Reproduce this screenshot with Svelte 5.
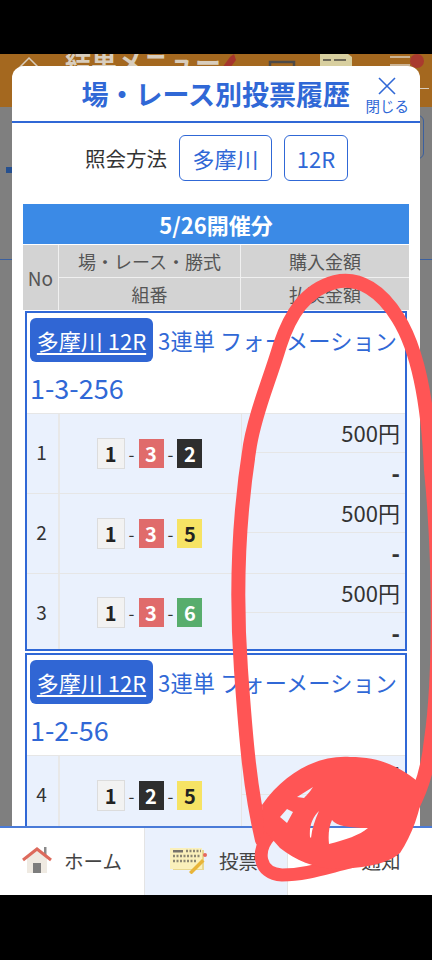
<script>
  const groups = [
    {
      combo: '1-3-256',
      rows: [
        { no: 1, boats: [1, 3, 2] },
        { no: 2, boats: [1, 3, 5] },
        { no: 3, boats: [1, 3, 6], short: true }
      ]
    },
    {
      combo: '1-2-56',
      rows: [{ no: 4, boats: [1, 2, 5] }]
    }
  ];
</script>

<div class="page">
  <div class="bar-top"></div>
  <main class="stage">
    <header class="bg-header">
      <svg class="bg-home" viewBox="0 0 24 24" width="24" height="24"><path d="M2 13 12 3l10 10M5 11v10h14V11" fill="none" stroke="#d8cdbd" stroke-width="1.5"/></svg>
      <span class="bg-title">結果メニュー</span>
      <svg class="bg-icons" viewBox="0 0 210 14" width="210" height="14">
        <path d="M4 14 12 3l4-3 2 6-6 8z" fill="#a5352d"/>
        <path d="M52 14V8h24v6" fill="none" stroke="#4d4a48" stroke-width="2.5"/>
        <path d="M102 0h28l4 3v11h-32z" fill="#d8cf9f"/>
        <path d="M105 5h8v2h-8zM116 5h12v2h-12z" fill="#6f6a58"/>
        <path d="M172 3h20M172 11h20" stroke="#d8cdbd" stroke-width="1.5"/>
        <circle cx="199" cy="7" r="7" fill="#a93a2e"/>
      </svg>
      <span class="bg-line"></span>
    </header>
    <span class="bg-btn"></span>
    <span class="bg-mark"></span>
    <span class="bg-rule"></span>

    <section class="modal">
      <div class="modal-head">
        <h1>場・レース別投票履歴</h1>
        <div class="close">
          <svg viewBox="0 0 20 20" width="20" height="20"><path d="M2 2 18 18M18 2 2 18" stroke="#3068d6" stroke-width="1.6" fill="none"/></svg>
          <span>閉じる</span>
        </div>
      </div>
      <div class="query">
        <span class="query-label">照会方法</span>
        <span class="chip venue">多摩川</span>
        <span class="chip">12R</span>
      </div>
      <div class="table">
        <div class="date">5/26開催分</div>
        <div class="thead">
          <div class="th no">No</div>
          <div class="th">場・レース・勝式</div>
          <div class="th">購入金額</div>
          <div class="th">組番</div>
          <div class="th">払戻金額</div>
        </div>
        {#each groups as g}
          <div class="group">
            <div class="group-head">
              <div class="line"><span class="pill">多摩川 12R</span><span class="kind">3連単 フォーメーション</span></div>
              <div class="combo">{g.combo}</div>
            </div>
            {#each g.rows as r}
              <div class="row" class:short={r.short}>
                <div class="cell num">{r.no}</div>
                <div class="cell boats">
                  {#each r.boats as b, i}
                    {#if i > 0}<span class="dash">-</span>{/if}
                    <span class="boat b{b}">{b}</span>
                  {/each}
                </div>
                <div class="amounts">
                  <div class="amt">500円</div>
                  <div class="amt dashv">-</div>
                </div>
              </div>
            {/each}
          </div>
        {/each}
      </div>
    </section>

    <nav class="nav">
      <div class="nav-item">
        <svg viewBox="0 0 30 28" width="30" height="28"><path d="M5 12 15 4l10 8v15H5z" fill="#efeae2"/><path d="M11 17h8v10h-8z" fill="#7d7d7d"/><path d="M22 1h2.500v8H22z" fill="#8a8a8a"/><path d="M1 14 15 3l14 11" fill="none" stroke="#dd6a5c" stroke-width="3"/></svg>
        <span>ホーム</span>
      </div>
      <div class="nav-item active">
        <svg viewBox="0 0 38 28" width="38" height="28">
          <path d="M1 2h32v21H1z" fill="#faf0bb"/>
          <path d="M33 4h2v20H4v-1h29z" fill="#e8d890"/>
          <path d="M4 4h10v2.500H4z" fill="#77736a"/>
          <path d="M4 10h27M4 15h24M17 5h15" stroke="#8b8672" stroke-width="2.500" stroke-dasharray="2 1.500" fill="none"/>
          <path d="M20 26 33 13l2.500 2.500-13 13z" fill="#e8b53a"/>
          <circle cx="36" cy="9" r="2" fill="#e5685e"/>
        </svg>
        <span>投票</span>
      </div>
      <div class="nav-item third">
        <svg viewBox="0 0 24 24" width="24" height="24"><path d="M12 3c-5 0-6 4-6 8l-2 6h16l-2-6c0-4-1-8-6-8z" fill="#f2b134"/><circle cx="12" cy="19" r="4" fill="#eda52a"/></svg>
        <span>通知</span>
      </div>
    </nav>

    <svg class="scribble" viewBox="0 0 432 841" width="432" height="841" aria-hidden="true">
      <g transform="translate(0,-54)">
        <path d="M262 840C250 790 246 740 241 670C236 600 238 520 250 445C256 410 268 385 280 345C290 315 305 290 335 282C360 276 382 292 398 318C418 350 428 400 431 470C440 560 440 680 431 740C427 780 415 805 398 830" fill="none" stroke="#ff5555" stroke-width="14" stroke-linecap="round"/>
        <path d="M270 835C256 850 258 874 282 875C305 875 325 868 350 862" fill="none" stroke="#ff5555" stroke-width="13" stroke-linecap="round"/>
        <path fill-rule="evenodd" fill="#ff5555" d="M262 805C285 772 318 755 350 757C385 757 405 770 424 787C420 812 412 835 400 853C385 866 360 868 333 869C315 868 295 860 280 848L264 830ZM297 797 313 787C310 792 305 797 304 798ZM280 817 287 809 293 812 287 823ZM310 837C309 825 313 817 319 811C315 820 312 828 311 838ZM332 820C336 826 350 828 368 828C360 835 345 840 329 844C328 835 329 826 332 820Z"/>
      </g>
    </svg>
  </main>
  <div class="bar-bottom"></div>
</div>

<style>
  :global(body) { margin: 0; background: #000; }
  .page {
    width: 432px; height: 960px; display: flex; flex-direction: column; overflow: hidden;
    font-family: "Noto Sans CJK JP", "Noto Sans", sans-serif; color: #333;
  }
  .bar-top { height: 54px; background: #000; flex: none; }
  .bar-bottom { height: 65px; background: #000; flex: none; }
  .stage { position: relative; flex: 1; background: #7f7f7f; overflow: hidden; }
  .bg-header { height: 53px; background: #a4681f; display: flex; align-items: flex-start; gap: 24px; padding-left: 17px; position: relative; overflow: hidden; }
  .bg-home { margin-top: 1px; }
  .bg-title { font-size: 26px; line-height: 26px; color: #d8cdbd; font-weight: 700; margin-top: -5px; }
  .bg-icons { position: absolute; left: 218px; top: 0; }
  .bg-line { position: absolute; left: 420px; top: 34px; width: 9px; height: 1px; background: #d8cdbd; }
  .bg-btn { position: absolute; left: 400px; top: 61px; width: 24px; height: 44px; border: 1.5px solid #3a5f9e; border-radius: 6px; box-sizing: border-box; }
  .bg-mark { position: absolute; left: 6px; top: 113px; width: 6px; height: 6px; background: #26508f; }
  .bg-rule { position: absolute; left: 0; right: 0; top: 205px; height: 1px; background: #3a5f9e; }

  .modal {
    position: absolute; left: 11.5px; top: 12px; width: 408.5px; bottom: 68px;
    background: #fff; border-radius: 12px 12px 0 0; overflow: hidden;
  }
  .modal-head {
    height: 55px; border-bottom: 2px solid #3068d6; display: flex; align-items: center; justify-content: center; position: relative;
  }
  h1 { margin: 0; font-size: 27px; font-weight: 700; color: #3068d6; line-height: 55px; }
  .close { position: absolute; right: 11px; top: 10px; display: flex; flex-direction: column; align-items: center; color: #3068d6; font-size: 14.5px; line-height: 18px; }
  .close span { margin-top: 1px; }
  .query { display: flex; align-items: center; justify-content: flex-start; padding: 12px 0 0 73.5px; gap: 12px; height: 46px; }
  .query-label { font-size: 20.5px; color: #333; }
  .chip {
    box-sizing: border-box; height: 46px; width: 64px; border: 1.5px solid #3068d6; border-radius: 6px; color: #3068d6;
    font-size: 22px; display: flex; align-items: center; justify-content: center;
  }
  .chip.venue { width: 93px; }

  .table { margin: 23px 11px 0 11.5px; width: 386px; }
  .date { height: 40px; background: #3b8ae6; color: #fff; font-size: 22px; font-weight: 700; text-align: center; line-height: 40px; }
  .thead {
    display: grid; grid-template-columns: 35px 181px 168px; grid-template-rows: 32px 32px; gap: 1px; margin-top: 1px; background: #f0f0f0;
  }
  .th { background: #d3d3d3; font-size: 18px; color: #555; display: flex; align-items: center; justify-content: center; }
  .th.no { grid-row: span 2; font-size: 19px; }

  .group { box-sizing: border-box; margin: 1px 2px 2px 2px; border: 2px solid #3068d6; background: #fff; }
  .group-head { padding: 5px 0 0 3px; height: 100px; box-sizing: border-box; }
  .line { display: flex; align-items: center; height: 44px; }
  .pill {
    background: #3066d4; color: #fff; border-radius: 6px; height: 44px; width: 123px; flex: none;
    font-size: 22px; text-decoration: underline; text-underline-offset: 3px; display: flex; align-items: center; justify-content: center; white-space: nowrap;
  }
  .kind { color: #3068d6; font-size: 22.2px; margin-left: 5px; white-space: nowrap; letter-spacing: 0.1px; }
  .combo { color: #3068d6; font-size: 27px; line-height: 50px; margin-top: 1px; }
  .row { display: grid; grid-template-columns: 33px 182px 1fr; background: #eaf1fd; border-top: 1px solid #e6e6e6; height: 79px; overflow: hidden; }
  .row.short { height: 75px; }
  .cell { display: flex; align-items: center; justify-content: center; }
  .num { font-size: 19px; border-right: 2px solid #e8e8e8; padding: 0 2px 4px 0; }
  .boats { gap: 4px; border-right: 1px solid #e6e6e6; padding: 0 2px 1px 0; }
  .row.short .boats { padding-bottom: 0; }
  .row.short .num { padding-bottom: 3px; }
  .dash { font-size: 17px; color: #333; }
  .boat { width: 25px; height: 29px; display: flex; align-items: center; justify-content: center; font-size: 20px; font-weight: 700; box-sizing: border-box; }
  .b1 { background: #f2f2f2; border: 1.5px solid #dcdcdc; color: #222; width: 28px; height: 31px; }
  .b2 { background: #2e2e2e; color: #fff; }
  .b3 { background: #e06b6b; color: #fff; }
  .b5 { background: #f6e364; color: #222; }
  .b6 { background: #58ad6d; color: #fff; }
  .amounts { display: grid; grid-template-rows: 38px 1fr; }
  .amt { font-size: 22px; color: #333; text-align: right; padding-right: 5px; line-height: 36px; }
  .amt + .amt { border-top: 1px solid #e6e6e6; }
  .dashv { font-weight: 900; line-height: 38px; }

  .nav {
    position: absolute; left: 0; right: 0; bottom: 0; height: 67px; border-top: 2px solid #4a7bd8; background: #fff;
    display: grid; grid-template-columns: 144px 144px 144px; box-sizing: content-box;
  }
  .nav-item { display: flex; align-items: center; justify-content: center; gap: 12px; font-size: 19.5px; color: #444; padding-bottom: 3px; }
  .nav-item.active { background: #eaf1fd; border-left: 1px solid #e4e4e4; border-right: 1px solid #e4e4e4; padding-right: 5px; }
  .nav-item.third { gap: 18px; }
  .scribble { position: absolute; left: 0; top: 0; pointer-events: none; }
</style>
